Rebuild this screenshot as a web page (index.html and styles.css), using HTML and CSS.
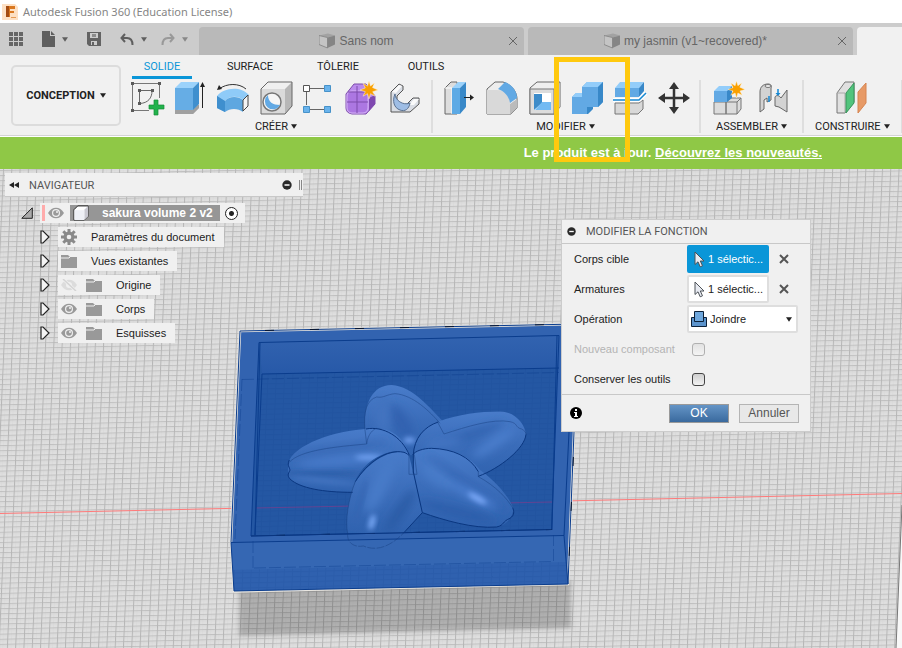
FILE: index.html
```html
<!DOCTYPE html>
<html lang="fr">
<head>
    <meta charset="UTF-8">
    <meta name="viewport" content="width=device-width, initial-scale=1.0">
    <title>Autodesk Fusion 360 (Education License)</title>
    <link rel="stylesheet" href="styles.css">
</head>
<body>
    <!-- shared icons -->
    <svg class="sprite" aria-hidden="true">
        <symbol id="caret" viewBox="0 0 7 5"><path d="M0 0h7L3.5 5z" fill="currentColor"/></symbol>
        <symbol id="part" viewBox="0 0 16 16">
            <path d="M0 2.500L9 .5l7 2-7.500 2z" fill="#a2a2a2"/>
            <path d="M0 2.500L8.500 4.500V15L0 11.500z" fill="#c4c4c4" stroke="#8c8c8c"/>
            <path d="M8.500 4.500L16 2.500v9L8.500 15z" fill="#858585"/>
        </symbol>
        <symbol id="eye" viewBox="0 0 16 12">
            <path d="M0 6C4-1 12-1 16 6 12 13 4 13 0 6z" fill="#999"/>
            <circle cx="8" cy="6" r="4" fill="#f0f0f0"/><circle cx="8" cy="6" r="2.800" fill="#999"/>
            <circle cx="9" cy="5" r="1" fill="#f0f0f0"/>
        </symbol>
        <symbol id="eye-off" viewBox="0 0 16 12">
            <path d="M0 6C4-1 12-1 16 6 12 13 4 13 0 6z" fill="#dcdcdc"/>
            <circle cx="8" cy="6" r="3" fill="#f0f0f0"/>
            <path d="M2 0l13 12" stroke="#f0f0f0" stroke-width="3"/><path d="M2 0l13 12" stroke="#d4d4d4" stroke-width="1.500"/>
        </symbol>
        <symbol id="folder" viewBox="0 0 16 14">
            <path d="M0 1h7l2 2h7v11H0z" fill="#999"/><path d="M0 4h8l2-2h6" fill="none" stroke="#f0f0f0"/>
        </symbol>
        <symbol id="arrow" viewBox="0 0 10 14"><path d="M1 1h2l6 6-6 6H1z" fill="#f4f4f4" stroke="#222" stroke-width="1.200"/></symbol>
        <symbol id="minus" viewBox="0 0 10 10"><circle cx="5" cy="5" r="4.700" fill="#2a2a2a"/><path d="M2.500 5h5" stroke="#fff" stroke-width="1.500"/></symbol>
        <symbol id="cross" viewBox="0 0 10 10"><path d="M1 1l8 8M9 1L1 9" stroke="currentColor" fill="none"/></symbol>
        <symbol id="pointer" viewBox="0 0 11 17">
            <path d="M1 1v12.500l3-2.700 2.200 5 2.300-1-2.200-4.800H10z" fill="#e8ebf2" stroke="#4d5258"/>
        </symbol>
        <symbol id="burst" viewBox="0 0 18 18">
            <path d="M9 0l1.500 5 4-3-2 4.500L18 9l-5.300 1.700 2.300 4.500-4.500-2.500L9 18l-1.500-5.300L3 15.200l2.300-4.500L0 9l5.300-2L3 2.200l4.500 2.900z" fill="#f9a000" stroke="#fff3d6" stroke-width=".5"/>
        </symbol>
    </svg>

    <header class="titlebar">
        <svg class="logo" viewBox="0 0 16 16">
            <path d="M0 0h13l3 3v13H0z" fill="#fde0c4"/>
            <path d="M4 2h9v3H8v2h4v2H8v4H4z" fill="#d9771f"/><path d="M4 2h3v11H4z" fill="#a34b12"/>
            <path d="M9 13h5v1H9z" fill="#e59a55"/>
        </svg>
        <h1>Autodesk Fusion 360 (Education License)</h1>
    </header>

    <div class="tabbar">
        <div class="quick">
            <button class="q-grid" aria-label="Panneau de données"><svg width="14" height="14" viewBox="0 0 14 14"><path d="M0 0h4v4H0zM5 0h4v4H5zM10 0h4v4h-4zM0 5h4v4H0zM5 5h4v4H5zM10 5h4v4h-4zM0 10h4v4H0zM5 10h4v4H5zM10 10h4v4h-4z" fill="#666"/></svg></button>
            <button class="q-file" aria-label="Fichier"><svg width="13" height="16" viewBox="0 0 13 16"><path d="M0 0h8v5h5v11H0z" fill="#5f5f5f"/><path d="M9 0l4 4H9z" fill="#5f5f5f"/></svg><svg class="caret"><use href="#caret"/></svg></button>
            <button class="q-save" aria-label="Enregistrer"><svg width="14" height="14" viewBox="0 0 14 14"><path d="M0 0h14v14H2l-2-2z" fill="#636363"/><path d="M3 1h8v5H3z" fill="#ccc"/><path d="M5 2h4v3H5z" fill="#8c8c8c"/><path d="M4 9h6v4H4z" fill="#ccc"/><path d="M5 10h2v3H5z" fill="#636363"/></svg></button>
            <button class="q-undo" aria-label="Annuler"><svg width="14" height="13" viewBox="0 0 14 13"><path d="M5 1L1.500 5 5 9M2 5h5c4 0 5.500 3 5.500 7" fill="none" stroke="#5f5f5f" stroke-width="2"/></svg><svg class="caret"><use href="#caret"/></svg></button>
            <button class="q-redo" aria-label="Rétablir"><svg width="14" height="13" viewBox="0 0 14 13"><path d="M9 1l3.500 4L9 9M12 5H7c-4 0-5.500 3-5.500 7" fill="none" stroke="#999" stroke-width="2"/></svg><svg class="caret"><use href="#caret"/></svg></button>
        </div>
        <div class="tab">
            <span class="tab-title"><svg><use href="#part"/></svg>Sans nom</span>
            <button aria-label="Fermer"><svg><use href="#cross"/></svg></button>
        </div>
        <div class="tab">
            <span class="tab-title"><svg><use href="#part"/></svg>my jasmin (v1~recovered)*</span>
            <button aria-label="Fermer"><svg><use href="#cross"/></svg></button>
        </div>
        <div class="tab active"></div>
    </div>

    <div class="toolbar">
        <button class="workspace">CONCEPTION <svg class="caret"><use href="#caret"/></svg></button>
        <div class="ribbon">
            <nav class="ribbon-tabs">
                <a href="#" class="active">SOLIDE</a>
                <a href="#">SURFACE</a>
                <a href="#">TÔLERIE</a>
                <a href="#">OUTILS</a>
            </nav>
            <div class="groups">
                <div class="group">
                    <div class="tools">
                        <button aria-label="Esquisse"><svg viewBox="0 0 36 36">
                            <path d="M5 3.500h24M3.500 5v24M5 30.500h15M30.500 5v13" fill="none" stroke="#777"/>
                            <path d="M10.500 11v12M11 10.500h12M23 11c0 7-4 12-12 12.500" fill="none" stroke="#666"/>
                            <path d="M2 2h3v3H2zM29 2h3v3h-3zM2 29h3v3H2zM9 9h3v3H9zM22 9h3v3h-3zM9 22h3v3H9z" fill="#5a5a5a"/>
                            <path d="M25 20h4v5h6v4h-6v6h-4v-6h-5v-4h5z" fill="#22b24c" stroke="#168c38" stroke-width=".7"/></svg></button>
                        <button aria-label="Extrusion"><svg viewBox="0 0 36 36">
                            <path d="M3 30l5-5h19v3l-6 6H3z" fill="#aaa"/><path d="M3 30h18l6-6v4l-6 6H3z" fill="#999" opacity=".6"/>
                            <path d="M3 8l6-6h18l-6 6z" fill="#9bd2fb"/><path d="M3 8h18v22H3z" fill="#66ade5"/><path d="M21 8l6-6v22l-6 6z" fill="#3f8fce"/>
                            <path d="M30.500 5v23" stroke="#222"/><path d="M30.500 2l2.500 5h-5z" fill="#222"/></svg></button>
                        <button aria-label="Révolution"><svg viewBox="0 0 36 36">
                            <path d="M2 16C8 8 25 5 34 15l-6 5c-5-5-14-4-18 1z" fill="#8fcbf8"/>
                            <path d="M2 16l8 5c4-5 13-5 18-1v12c-5-4-13-4-18 0l-8-4z" fill="#5ea7e0"/><path d="M2 16l8 5v11l-8-4z" fill="#3f8fce"/>
                            <path d="M28 20l5-5v11l-5 5z" fill="#f4f4f4" stroke="#444"/>
                            <path d="M4 9C12 3 24 3 31 9" fill="none" stroke="#333"/><path d="M2 10l2-5 3 4z" fill="#222"/></svg></button>
                        <button aria-label="Perçage"><svg viewBox="0 0 36 36">
                            <path d="M3 9l7-7h24l-7 7z" fill="#f0f0f0"/><path d="M3 9h24v25H3z" fill="#dadada"/><path d="M27 9l7-7v24l-7 8z" fill="#b7b7b7"/>
                            <path d="M3 9l7-7h24v24l-7 8H3z" fill="none" stroke="#666"/><circle cx="14" cy="22" r="9" fill="#f6f6f6" stroke="#777" stroke-width="1.500"/>
                            <path d="M10 15a8 8 0 1 0 12 10C15 25 10 22 10 15z" fill="#62a9e4"/></svg></button>
                        <button aria-label="Réseau"><svg viewBox="0 0 36 36">
                            <path d="M9 8.500h14M9 29.500h14M5.500 12v13" stroke="#666"/>
                            <path d="M2.500 5.500h6v6h-6z" fill="#fff" stroke="#555"/>
                            <path d="M23.500 5.500h6v6h-6zM2.500 26.500h6v6h-6zM23.500 26.500h6v6h-6z" fill="#69b3ec" stroke="#4792c9"/></svg></button>
                        <button aria-label="Créer une forme"><svg viewBox="0 0 36 36">
                            <path d="M2 14l8-10h12l9 12v8l-9 10H8q-6-1-6-6z" fill="#bb8cec" stroke="#7d4cab"/>
                            <path d="M25 18l6-3v9l-6 7z" fill="#7f48b0"/><rect x="3" y="11" width="21" height="22" rx="5" fill="#ac77e2" stroke="#d5b3f6"/>
                            <path d="M13 6v27M3 22h21M4 12h19l6-4" stroke="#7d4cab" fill="none"/><use href="#burst" x="16" y="1" width="18" height="18"/></svg></button>
                        <button aria-label="Bride"><svg viewBox="0 0 36 36">
                            <path d="M4 12l8-8 4 2v4l-6 6v11h7l9-9h6v6l-9 8H4z" fill="#d9dde4" stroke="#555"/>
                            <path d="M5 12l7-7 3 1-6 7zM22 25l5-6h5l-5 6z" fill="#fafafa"/>
                            <path d="M8 14c0 6 8 12 15 9-1 6-5 9-10 7-6-2-8-9-5-16z" fill="#9ebde5" stroke="#5a7191"/></svg></button>
                    </div>
                    <button class="group-label">CRÉER <svg class="caret"><use href="#caret"/></svg></button>
                </div>
                <div class="group">
                    <div class="tools">
                        <button aria-label="Appuyer/Tirer"><svg viewBox="0 0 36 36">
                            <path d="M5 8l6-6h6v32H5z" fill="#ddd" stroke="#666"/><path d="M5 8h7v26" fill="none" stroke="#fff"/>
                            <path d="M12 8l6-6h8l-6 6z" fill="#9bd2fb"/><path d="M12 8h8v26h-8z" fill="#5daae5"/><path d="M20 8l6-6v25l-6 7z" fill="#3888c8"/>
                            <path d="M24 17.500h7" stroke="#222"/><path d="M34 17.500l-4-3v6z" fill="#222"/></svg></button>
                        <button aria-label="Congé"><svg viewBox="0 0 36 36">
                            <path d="M4 9l8-7h8c10 3 14 11 14 17v9l-6 6H4z" fill="#ededed" stroke="#666"/>
                            <path d="M4 10h10c8 0 13 6 13 14v10H4z" fill="#d9d9d9"/><path d="M27 24l7-5v9l-6 6h-1z" fill="#bbb"/>
                            <path d="M15 9l7-7c8 3 12 10 12 16l-7 5C26 16 21 11 15 9z" fill="#62a9e4"/></svg></button>
                        <button aria-label="Coque"><svg viewBox="0 0 36 36">
                            <path d="M4 8l7-6h23v25l-6 7H4z" fill="#eee" stroke="#666"/><path d="M4 9h24v25H4z" fill="#dcdcdc" stroke="#777"/><path d="M28 9l6-6v24l-6 6z" fill="#bbb"/>
                            <path d="M8 13h17v17H8z" fill="#fff"/><path d="M8 14h8v9l-8 7z" fill="#3c8bc9"/><path d="M9 30l7-8h9v8z" fill="#73baf2"/></svg></button>
                        <button aria-label="Combiner"><svg viewBox="0 0 36 36">
                            <path d="M3 17l4-4h6V7l5-5h16v20l-5 5h-6v2l-5 5H3z" fill="#62a9e4"/>
                            <path d="M3 17l4-4h6v4zM13 7l5-5h16l-5 5z" fill="#93cdfa"/>
                            <path d="M29 7l5-5v20l-5 5zM18 27h6v2l-5 5h-1z" fill="#3888c8"/></svg></button>
                        <button aria-label="Scinder le corps"><svg viewBox="0 0 36 36">
                            <path d="M3 8l5-6h24l-5 6z" fill="#93cdfa"/><path d="M3 8h24v9H3z" fill="#62a9e4"/><path d="M27 8l5-6v9l-5 6z" fill="#3888c8"/>
                            <path d="M3 23h24l4-3v9l-5 5H3z" fill="#d8d8d8" stroke="#777"/><path d="M1 20h26l7-7" fill="none" stroke="#fff" stroke-width="4"/><path d="M1 20h26l7-7" fill="none" stroke="#1688d2" stroke-width="1.500"/></svg></button>
                        <button aria-label="Déplacer"><svg viewBox="0 0 36 36">
                            <path d="M19 8v20M9 18h20" stroke="#333" stroke-width="2.500"/>
                            <path d="M19 2l5 7H14zM19 34l5-7H14zM3 18l7-5v10zM35 18l-7-5v10z" fill="#333"/></svg></button>
                        <span class="highlight"></span>
                    </div>
                    <button class="group-label">MODIFIER <svg class="caret"><use href="#caret"/></svg></button>
                </div>
                <div class="group wide">
                    <div class="tools">
                        <button aria-label="Nouveau composant"><svg viewBox="0 0 36 36">
                            <path d="M2 22h12v12H2zM14 22l5-4h10v11l-4 5H14z" fill="#dcdcdc" stroke="#777"/><path d="M14 22h11v12M25 22l4-4" fill="none" stroke="#777"/>
                            <path d="M2 11l5-5h13l-5 5z" fill="#93cdfa"/><path d="M2 11h13v11H2z" fill="#62a9e4"/><path d="M15 11l5-5v12l-5 4z" fill="#3888c8"/>
                            <use href="#burst" x="16" y="1" width="17" height="17"/></svg></button>
                        <button aria-label="Liaison"><svg viewBox="0 0 36 36">
                            <path d="M5 12c0-5 3-8 8-8 3 0 4 2 3 4v12l-4 2v-4l-3 2v9l-4 3z" fill="#d3d3d3" stroke="#666"/>
                            <path d="M20 17c1-2 4-2 6 1l6-8v22l-8-5-4-1z" fill="#d3d3d3" stroke="#666"/><ellipse cx="13" cy="6" rx="3" ry="1.500" fill="#eee" stroke="#777"/>
                            <path d="M14 16v6M23 9v6" stroke="#1688d2" stroke-width="1.500"/><path d="M20.500 13h5L23 16z" fill="#1688d2"/></svg></button>
                    </div>
                    <button class="group-label">ASSEMBLER <svg class="caret"><use href="#caret"/></svg></button>
                </div>
                <div class="group wide">
                    <div class="tools">
                        <button aria-label="Plan de décalage"><svg viewBox="0 0 36 36">
                            <path d="M3 13l8-11h9v20l-9 11H3z" fill="#e0e0e0" stroke="#777"/><path d="M3 13h8v20" fill="none" stroke="#aaa"/>
                            <path d="M12 13l8-10v20l-8 10z" fill="#51c47c" stroke="#39935b"/><path d="M24 12l8-9v20l-8 10z" fill="#e79a66" stroke="#d68450"/></svg></button>
                    </div>
                    <button class="group-label">CONSTRUIRE <svg class="caret"><use href="#caret"/></svg></button>
                </div>
            </div>
        </div>
    </div>

    <div class="banner">Le produit est à jour. <a href="#">Découvrez les nouveautés.</a></div>

    <main class="viewport">
        <svg class="scene" viewBox="0 169 902 479" preserveAspectRatio="xMinYMin slice">
            <defs>
                <pattern id="grid" width="8.300" height="5.100" patternUnits="userSpaceOnUse" patternTransform="matrix(1 -.0222 -.044 1 3 170)">
                    <path d="M0 0h8.300v5.100H0z" fill="#dfdfdf"/>
                    <path d="M0 2.500h8.300M4 0v5.100" stroke="#d7d7d7" stroke-width=".6"/>
                    <path d="M0 .5h8.300" stroke="#c0c0c0"/><path d="M.5 0v5.100" stroke="#b6b6b6"/>
                </pattern>
                <pattern id="floorgrid" width="8.300" height="5.100" patternUnits="userSpaceOnUse" patternTransform="matrix(1 -.0222 -.044 1 3 170)">
                    <path d="M0 .5h8.300M.5 0v5.100" stroke="#0d3f8c" stroke-opacity=".13" fill="none"/>
                </pattern>
                <linearGradient id="wall" x1="0" y1="0" x2="0" y2="1"><stop offset="0" stop-color="#3263b0"/><stop offset="1" stop-color="#2759a8"/></linearGradient>
                <linearGradient id="top" x1="0" y1="0" x2="0" y2="1"><stop offset="0" stop-color="#4a7dcb"/><stop offset=".5" stop-color="#3b6dba"/><stop offset="1" stop-color="#2f62af"/></linearGradient>
                <filter id="soft" x="-50%" y="-100%" width="200%" height="300%"><feGaussianBlur stdDeviation="13"/></filter>
                <filter id="glow" x="-50%" y="-100%" width="200%" height="300%"><feGaussianBlur stdDeviation="8"/></filter>
                <filter id="shade" x="-10%" y="-10%" width="120%" height="120%"><feGaussianBlur stdDeviation="2"/></filter>
                <clipPath id="p1"><path d="M255 165C250 100 270 30 335 30 400 35 450 100 490 140 440 150 405 190 400 240H385C370 190 330 160 290 160z"/></clipPath>
                <clipPath id="p2"><path d="M400 240C405 190 430 155 475 140 540 115 620 108 670 110 710 115 735 150 738 178 735 220 660 280 600 300 540 240 470 215 410 230z"/></clipPath>
                <clipPath id="p3"><path d="M387 235C370 185 330 160 290 160 180 163 60 200 28 255 22 275 22 300 30 312 60 340 130 352 218 352L225 320C250 260 310 230 350 229z"/></clipPath>
                <clipPath id="p4"><path d="M400 240C405 230 420 222 455 220 520 222 570 245 600 285 650 320 690 370 700 400 700 425 680 450 650 456 580 462 490 435 427 413L400 290z"/></clipPath>
                <clipPath id="p5"><path d="M385 232C320 220 260 270 226 320 205 370 195 440 203 475H370L427 413 400 295z"/></clipPath>
            </defs>

            <path d="M0 169h902v479H0z" fill="url(#grid)"/>
            <path d="M902 505l-6 143h6z" fill="#f8f8f8"/><path d="M902 505l-6 143" stroke="#777"/>
            <path d="M0 513.500L902 493.500" stroke="#ff7a7a"/>

            <!-- shadow under the tray -->
            <path d="M239 580h332v48l-332 8z" fill="#000" fill-opacity=".21" filter="url(#shade)"/>

            <!-- tray -->
            <path d="M240 331L577 324 574 432 568 584 234 591.500 231 542z" fill="#3263b0" stroke="#e9e6e0" stroke-width="2.500"/>
            <path d="M231 542.500L564 535.500 568 584 234 591z" fill="#3567b3"/>
            <path d="M233 570l334-8 1 22-334 7z" fill="#2c5dac" opacity=".6"/>
            <path d="M233 570l334-8 1 22-334 7z" fill="url(#floorgrid)"/>
            <path d="M259 342.500L559 335.500 551.500 529.500 251 536z" fill="#2457a3"/>
            <path d="M259 342.500L559 335.500 559 368 262 374z" fill="url(#wall)"/>
            <path d="M262 374L559 368 551.500 529.500 255 536z" fill="url(#floorgrid)"/>
            <path d="M255 508L552 502" stroke="#7c3c8c" stroke-opacity=".7"/>
            <g fill="none" stroke="#0b3d8d">
                <path d="M240 331L577 324M240 331L231 542.500 234 591 568 584 574 432 577 324M231 542.500L564 535.500 568 584M564 535.500L569 432 573 324"/>
                <path d="M259 342.500L559 335.500 551.500 529.500 251 536zM262 374L559 368M260 343l-5 192M262 374l-7 161M557 336l-5 194"/>
                <path d="M242 379.500L559 372.500M254 568L553.500 561.500M253 568v-29M553.500 561v-26M242 379l-7 160" stroke-opacity=".4" stroke-dasharray="12 3"/>
            </g>
            <path d="M240 331L577 324M251 536L551.500 529.500M574.500 432L568 584" stroke="#07152f" stroke-dasharray="9 36" stroke-dashoffset="-25" fill="none"/>

            <!-- flower, drawn at three times its size -->
            <g transform="translate(280 375) scale(.3333)">
                <g clip-path="url(#p1)">
                    <path d="M240 20h260v230H240z" fill="url(#top)"/>
                    <ellipse cx="360" cy="140" rx="26" ry="60" fill="#3062b0" transform="rotate(-35 360 140)" filter="url(#soft)"/>
                    <ellipse cx="310" cy="120" rx="22" ry="60" fill="#4273c0" filter="url(#soft)"/>
                    <ellipse cx="388" cy="196" rx="18" ry="9" fill="#6f9fee" filter="url(#glow)"/>
                </g>
                <g clip-path="url(#p2)">
                    <path d="M390 100h360v210H390z" fill="url(#top)"/>
                    <ellipse cx="560" cy="185" rx="120" ry="14" fill="#3163b0" transform="rotate(-20 560 185)" filter="url(#soft)"/>
                    <ellipse cx="640" cy="205" rx="75" ry="14" fill="#4c7fce" transform="rotate(-34 640 205)" filter="url(#soft)"/>
                    <ellipse cx="490" cy="205" rx="60" ry="12" fill="#4678c6" transform="rotate(-10 490 205)" filter="url(#soft)"/>
                </g>
                <g clip-path="url(#p3)">
                    <path d="M15 150h380v210H15z" fill="url(#top)"/>
                    <ellipse cx="180" cy="222" rx="150" ry="8" fill="#3465b2" transform="rotate(-8 180 222)" filter="url(#soft)"/>
                    <ellipse cx="190" cy="256" rx="140" ry="13" fill="#4a7dcd" transform="rotate(-5 190 256)" filter="url(#soft)"/>
                    <ellipse cx="265" cy="247" rx="40" ry="8" fill="#70a0f0" filter="url(#glow)"/>
                    <ellipse cx="130" cy="296" rx="120" ry="6" fill="#2b5ca6" filter="url(#glow)"/>
                    <ellipse cx="130" cy="318" rx="100" ry="8" fill="#4273c0" transform="rotate(6 130 318)" filter="url(#glow)"/>
                </g>
                <g clip-path="url(#p4)">
                    <path d="M390 210h320v250H390z" fill="url(#top)"/>
                    <ellipse cx="475" cy="300" rx="60" ry="30" fill="#477ac8" transform="rotate(35 475 300)" filter="url(#soft)"/>
                    <ellipse cx="560" cy="325" rx="150" ry="8" fill="#3062b0" transform="rotate(35 560 325)" filter="url(#soft)"/>
                    <ellipse cx="580" cy="362" rx="80" ry="13" fill="#4c7fd0" transform="rotate(28 580 362)" filter="url(#soft)"/>
                    <ellipse cx="592" cy="370" rx="32" ry="8" fill="#80adfd" transform="rotate(30 592 370)" filter="url(#glow)"/>
                    <ellipse cx="530" cy="410" rx="120" ry="12" fill="#2a5ca9" transform="rotate(15 530 410)" filter="url(#soft)"/>
                </g>
                <g clip-path="url(#p5)">
                    <path d="M190 220h245v260H190z" fill="url(#top)"/>
                    <ellipse cx="300" cy="330" rx="25" ry="90" fill="#477ac8" transform="rotate(25 300 330)" filter="url(#soft)"/>
                    <ellipse cx="240" cy="390" rx="6" ry="80" fill="#3465b2" transform="rotate(15 240 390)" filter="url(#glow)"/>
                    <ellipse cx="276" cy="442" rx="9" ry="24" fill="#78a8f6" transform="rotate(15 276 442)" filter="url(#glow)"/>
                    <ellipse cx="360" cy="410" rx="16" ry="80" fill="#2b5ca6" transform="rotate(35 360 410)" filter="url(#soft)"/>
                </g>
                <g fill="none" stroke="#0a3680" stroke-width="3">
                    <path d="M258 162C310 152 365 185 387 238M400 295V240C402 190 432 155 475 141M738 178C735 220 660 280 595 304M30 312C60 340 130 352 218 352M28 255C18 275 35 280 28 290 22 300 25 306 30 312"/>
                    <path d="M226 320C260 265 320 220 372 232 383 235 388 245 387 238M398 240C405 228 430 220 455 220 520 222 570 245 595 290M400 290L427 413C490 435 580 462 650 456 675 450 665 440 690 430 705 420 702 408 698 398M427 413L370 475"/>
                </g>
                <g fill="none" stroke="#173f80" stroke-width="2" opacity=".7">
                    <path d="M255 165C250 110 260 75 290 66 310 70 320 58 345 56 400 60 450 110 480 145M472 140l20 37M255 165l5 42C264 175 280 163 290 160"/>
                    <path d="M492 177C560 155 640 130 690 140 715 145 705 158 725 162 735 168 738 172 738 178M260 207C170 215 60 225 28 262M226 320C205 370 195 440 203 475M387 238v60h24l-8-60M595 290v15C650 335 680 370 698 398"/>
                    <path d="M203 475C200 505 225 518 250 513 290 530 330 515 370 475" stroke-dasharray="24 4"/>
                </g>
            </g>
            <path d="M251 536L551.500 529.500" stroke="#0a3680"/>
        </svg>

        <section class="navigator">
            <div class="nav-head">
                <svg width="10" height="6" viewBox="0 0 10 6"><path d="M5 0v6L0 3zM10 0v6L5 3z" fill="#222"/></svg>
                <h2>NAVIGATEUR</h2>
                <button aria-label="Réduire"><svg><use href="#minus"/></svg></button>
                <span class="grip"></span>
            </div>
            <div class="row root">
                <button class="toggle" aria-label="Replier"><svg viewBox="0 0 12 12"><path d="M.8 11.300L11.300 .8v10.500z" fill="#aaa" stroke="#222"/></svg></button>
                <div class="item">
                    <span class="flag"></span>
                    <button class="vis" aria-label="Visibilité"><svg><use href="#eye"/></svg></button>
                    <span class="name"><svg viewBox="0 0 17 17"><path d="M1 5l4-4h11v11l-4 4H1z" fill="#fff" stroke="#222"/><path d="M12 5l4-4v11l-4 4z" fill="#c9c9d2"/><path d="M1.500 5.500H12V16H1.500z" fill="#eef0f6"/></svg><b>sakura volume 2 v2</b></span>
                    <input type="radio" name="active" aria-label="Activer le composant" checked>
                </div>
            </div>
            <ul>
                <li class="row">
                    <button class="toggle" aria-label="Déplier"><svg><use href="#arrow"/></svg></button>
                    <div class="item"><svg class="ico" viewBox="0 0 16 16"><path d="M8 0v16M0 8h16M2.300 2.300l11.400 11.400M13.700 2.300L2.300 13.700" stroke="#8a8a8a" stroke-width="3"/><circle cx="8" cy="8" r="5.500" fill="#8a8a8a"/><circle cx="8" cy="8" r="2.300" fill="#f0f0f0"/></svg><span>Paramètres du document</span></div>
                </li>
                <li class="row">
                    <button class="toggle" aria-label="Déplier"><svg><use href="#arrow"/></svg></button>
                    <div class="item"><svg class="ico"><use href="#folder"/></svg><span>Vues existantes</span></div>
                </li>
                <li class="row">
                    <button class="toggle" aria-label="Déplier"><svg><use href="#arrow"/></svg></button>
                    <div class="item"><button class="vis" aria-label="Visibilité"><svg><use href="#eye-off"/></svg></button><svg class="ico"><use href="#folder"/></svg><span>Origine</span></div>
                </li>
                <li class="row">
                    <button class="toggle" aria-label="Déplier"><svg><use href="#arrow"/></svg></button>
                    <div class="item"><button class="vis" aria-label="Visibilité"><svg><use href="#eye"/></svg></button><svg class="ico"><use href="#folder"/></svg><span>Corps</span></div>
                </li>
                <li class="row">
                    <button class="toggle" aria-label="Déplier"><svg><use href="#arrow"/></svg></button>
                    <div class="item"><button class="vis" aria-label="Visibilité"><svg><use href="#eye"/></svg></button><svg class="ico"><use href="#folder"/></svg><span>Esquisses</span></div>
                </li>
            </ul>
        </section>

        <form class="dialog">
            <div class="dialog-head">
                <svg><use href="#minus"/></svg>
                <h2>MODIFIER LA FONCTION</h2>
            </div>
            <div class="fields">
                <label for="target">Corps cible</label>
                <div class="pick">
                    <button type="button" id="target" class="selected"><svg><use href="#pointer"/></svg>1 sélectic...</button>
                    <button type="button" class="clear" aria-label="Effacer"><svg><use href="#cross"/></svg></button>
                </div>
                <label for="tools">Armatures</label>
                <div class="pick">
                    <button type="button" id="tools"><svg><use href="#pointer"/></svg>1 sélectic...</button>
                    <button type="button" class="clear" aria-label="Effacer"><svg><use href="#cross"/></svg></button>
                </div>
                <label for="operation">Opération</label>
                <div class="select">
                    <select id="operation"><option>Joindre</option></select>
                    <svg class="op" viewBox="0 0 16 16"><path d="M.5 6.500h15v9H.5z" fill="#5b93cc" stroke="#0c2038"/><path d="M3.500 .5h9v10h-9z" fill="#6fa8de" stroke="#0c2038"/></svg>
                    <svg class="caret"><use href="#caret"/></svg>
                </div>
                <label for="component" class="off">Nouveau composant</label>
                <input type="checkbox" id="component" disabled>
                <label for="keep">Conserver les outils</label>
                <input type="checkbox" id="keep">
            </div>
            <div class="dialog-foot">
                <svg class="info" viewBox="0 0 12 12"><circle cx="6" cy="6" r="6" fill="#000"/><path d="M5 2h2v2H5zM4 5h3v4h1v1H4V9h1V6H4z" fill="#fff"/></svg>
                <button type="submit" class="ok">OK</button>
                <button type="button">Annuler</button>
            </div>
        </form>
    </main>
</body>
</html>
```
FILE: styles.css
```css
* {
    box-sizing: border-box;
}

body {
    margin: 0;
    min-height: 100vh;
    display: flex;
    flex-direction: column;
    font-family: "Liberation Sans", Arial, sans-serif;
    font-size: 11px;
    color: #222;
    background-color: #fff;
}

h1, h2, ul {
    margin: 0;
    padding: 0;
    font-weight: normal;
    list-style: none;
}

button {
    display: flex;
    align-items: center;
    padding: 0;
    border: none;
    background: none;
    color: inherit;
    font: inherit;
    cursor: pointer;
}

svg {
    display: block;
    flex: none;
}

.sprite {
    position: absolute;
    width: 0;
    height: 0;
}

.caret {
    width: 6px;
    height: 5px;
}

/* title bar */
.titlebar {
    display: flex;
    align-items: center;
    gap: 5px;
    height: 23px;
    padding: 0 2px;
}

.logo {
    width: 16px;
    height: 16px;
}

.titlebar h1 {
    font-family: "Noto Sans", sans-serif;
    font-size: 11px;
    color: #858585;
}

/* document tabs */
.tabbar {
    display: flex;
    gap: 4px;
    height: 32px;
    padding-top: 4px;
    background-color: #ccc;
}

.quick {
    display: flex;
    align-items: center;
    flex: none;
    width: 195px;
    padding-left: 9px;
    padding-bottom: 4px;
    color: #5f5f5f;
}

.quick button {
    gap: 7px;
}

.quick .q-file,
.quick .q-save,
.quick .q-undo {
    margin-left: 19px;
}

.quick .q-redo {
    margin-left: 14px;
    color: #888;
}

.tab {
    display: flex;
    align-items: center;
    flex: 1;
    padding: 0 6px;
    border-radius: 4px 4px 0 0;
    background-color: #b9b9b9;
    color: #666;
    font-size: 12px;
}

.tab-title {
    display: flex;
    align-items: center;
    justify-content: center;
    flex: 1;
    gap: 4px;
}

.tab-title svg {
    width: 16px;
    height: 16px;
}

.tab button svg {
    width: 10px;
    height: 10px;
}

.tab.active {
    flex: none;
    width: 45px;
    border-radius: 4px 0 0 0;
    background-color: #f1f1f1;
}

/* toolbar */
.toolbar {
    display: flex;
    gap: 8px;
    padding: 0 0 2px 11px;
    border-bottom: 1px solid #d4d4d4;
    background-color: #f1f1f1;
    font-family: Roboto, sans-serif;
}

.workspace {
    flex: none;
    justify-content: center;
    gap: 5px;
    width: 110px;
    height: 61px;
    margin-top: 10px;
    border: 2px solid #dcdcdc;
    border-radius: 5px;
    font-weight: bold;
}

.ribbon {
    flex: 1;
    min-width: 0;
}

.ribbon-tabs {
    display: flex;
    gap: 28px;
    padding-left: 3px;
}

.ribbon-tabs a {
    width: 60px;
    height: 24px;
    padding-top: 4px;
    line-height: 15px;
    text-align: center;
    text-decoration: none;
    color: #222;
}

.ribbon-tabs a.active {
    border-bottom: 3px solid #0a96d8;
    color: #0a96d8;
}

.groups {
    display: flex;
}

.group {
    display: flex;
    flex: none;
    flex-direction: column;
    align-items: center;
    margin-top: 1px;
    padding: 0 8px 0 7px;
    border-right: 2px solid #dedede;
}

.group:first-child {
    padding-left: 0;
}

.group.wide {
    padding: 0 11px;
}

.tools {
    position: relative;
    display: flex;
    gap: 7px;
}

.tools svg {
    width: 36px;
    height: 36px;
}

.group-label {
    gap: 3px;
    height: 17px;
    padding-top: 3px;
}

/* yellow frame round the combine tool */
.highlight {
    position: absolute;
    left: 114px;
    top: -23px;
    width: 76px;
    height: 105px;
    border: 5px solid #ffc90e;
    pointer-events: none;
    z-index: 2;
}

.banner {
    height: 32px;
    margin-top: 1px;
    padding-right: 80px;
    background-color: #8fc846;
    color: #fff;
    font-size: 13px;
    font-weight: bold;
    line-height: 31px;
    text-align: right;
}

.banner a {
    color: #fff;
}

/* model view */
.viewport {
    position: relative;
    flex: 1;
    min-height: 479px;
    overflow: hidden;
}

.scene {
    position: absolute;
    inset: 0;
    width: 100%;
    height: 100%;
}

.navigator {
    position: absolute;
    left: 5px;
    top: 4px;
    width: 298px;
}

.nav-head {
    display: flex;
    align-items: center;
    gap: 10px;
    height: 24px;
    margin-bottom: 4px;
    padding: 1px 1px 0 4px;
    border-bottom: 1px solid #c8c8c8;
    background-color: #f0f0f0;
}

.nav-head h2,
.dialog-head h2 {
    flex: 1;
    font-family: Roboto, sans-serif;
    font-size: 11px;
    color: #555;
}

.nav-head button svg {
    width: 10px;
    height: 10px;
}

.grip {
    width: 3px;
    height: 10px;
    margin-left: -3px;
    border: 1px solid #888;
    border-width: 0 1px;
}

.row {
    display: flex;
    align-items: center;
    height: 24px;
    padding-left: 35px;
}

.row.root {
    padding-left: 16px;
}

.toggle {
    width: 18px;
}

.toggle svg {
    width: 10px;
    height: 14px;
}

.root .toggle {
    width: 19px;
}

.root .toggle svg {
    width: 12px;
    height: 12px;
}

.item {
    display: flex;
    align-items: center;
    height: 20px;
    padding: 0 9px 0 3px;
    background-color: #f0f0f0;
}

.item > span {
    margin-left: 14px;
}

.ico {
    width: 16px;
    height: 16px;
}

.vis + .ico {
    margin-left: 9px;
}

.vis svg {
    width: 16px;
    height: 12px;
}

.root .item {
    padding: 0 7px 0 2px;
}

.item .flag {
    width: 3px;
    height: 16px;
    margin: 0 3px 0 0;
    background-color: #ffabab;
}

.item .name {
    display: flex;
    align-items: center;
    gap: 13px;
    width: 150px;
    height: 16px;
    margin: 0 5px 0 6px;
    padding-left: 3px;
    background-color: #969696;
    color: #fff;
    font-size: 12px;
}

.name svg {
    width: 16px;
    height: 16px;
}

.item input {
    appearance: none;
    width: 13px;
    height: 13px;
    margin: 0;
    border: 1px solid #222;
    border-radius: 50%;
    background: radial-gradient(circle, #222 2px, #fff 3px);
}

/* dialog */
.dialog {
    position: absolute;
    right: 91px;
    top: 50px;
    width: 250px;
    border: 1px solid #ccc;
    background-color: #f0f0f0;
}

.dialog-head {
    display: flex;
    align-items: center;
    gap: 10px;
    height: 24px;
    padding-left: 5px;
    border-bottom: 1px solid #c8c8c8;
}

.dialog-head svg {
    width: 9px;
    height: 9px;
}

.fields {
    display: grid;
    grid-template-columns: 113px 1fr;
    grid-auto-rows: 30px;
    align-items: center;
    padding-left: 12px;
}

.fields .off {
    color: #b4b4b4;
}

.pick {
    display: flex;
    align-items: center;
    gap: 10px;
}

.pick button:first-child {
    gap: 3px;
    width: 82px;
    height: 28px;
    padding-left: 5px;
    border: 2px solid #dedede;
    border-radius: 2px;
    background-color: #fff;
    white-space: nowrap;
}

.pick .selected:first-child {
    border-color: #0a96d8;
    background-color: #0a96d8;
    color: #fff;
}

.pick button:first-child svg {
    width: 11px;
    height: 17px;
}

.clear svg {
    width: 10px;
    height: 10px;
    color: #555;
    stroke-width: 2px;
}

.select {
    position: relative;
    width: 111px;
}

.select select {
    appearance: none;
    width: 100%;
    height: 28px;
    padding: 0 16px 0 21px;
    border: 2px solid #dedede;
    border-radius: 2px;
    background-color: #fff;
    color: #222;
    font: inherit;
}

.select svg {
    position: absolute;
    pointer-events: none;
}

.select .op {
    left: 4px;
    top: 6px;
    width: 16px;
    height: 16px;
}

.select .caret {
    right: 6px;
    top: 12px;
}

.fields input {
    appearance: none;
    width: 13px;
    height: 13px;
    margin: 0 0 0 5px;
    border: 1px solid #444;
    border-radius: 3px;
    background: linear-gradient(#cfcfcf, #f2f2f2);
}

.fields input:disabled {
    border-color: #b0b0b0;
    background: linear-gradient(#e2e2e2, #f4f4f4);
}

.dialog-foot {
    display: flex;
    align-items: center;
    gap: 10px;
    height: 37px;
    padding: 0 11px 0 8px;
    border-top: 1px solid #c8c8c8;
}

.dialog-foot button {
    justify-content: center;
    width: 60px;
    height: 19px;
    border: 1px solid #b4b4b4;
    background-color: #e8e8e8;
    color: #555;
    font-size: 12px;
}

.dialog-foot .ok {
    border-color: #999;
    background: linear-gradient(#6494c6, #3a6a9e);
    color: #fff;
}

.info {
    width: 12px;
    height: 12px;
    margin-right: auto;
}
```
